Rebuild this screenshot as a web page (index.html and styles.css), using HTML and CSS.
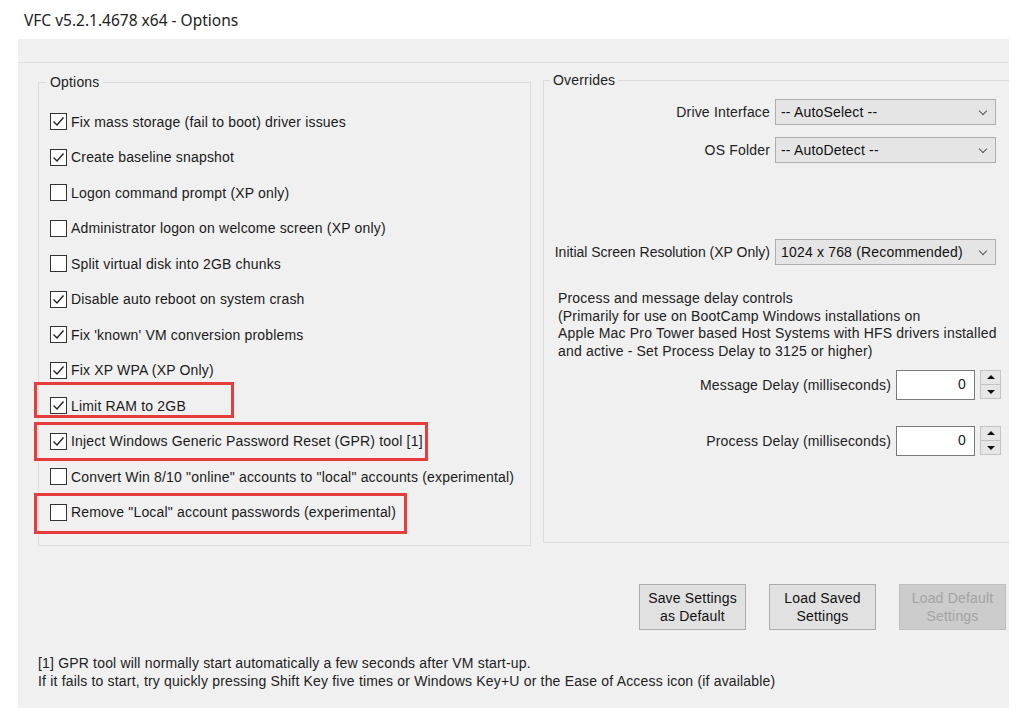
FILE: index.html
```html
<!DOCTYPE html>
<html lang="en">

<head>
    <meta charset="UTF-8">
    <meta name="viewport" content="width=device-width, initial-scale=1.0">
    <title>VFC v5.2.1.4678 x64 - Options</title>
    <link rel="stylesheet" href="styles.css">
</head>

<body>
    <div class="titlebar">VFC v5.2.1.4678 x64 - Options</div>

    <div class="window">
        <div class="top-strip"></div>

        <div class="main">
            <fieldset class="group options-group">
                <legend>Options</legend>
                <div class="option"><span class="box checked"></span>Fix mass storage (fail to boot) driver issues</div>
                <div class="option"><span class="box checked"></span>Create baseline snapshot</div>
                <div class="option"><span class="box"></span>Logon command prompt (XP only)</div>
                <div class="option"><span class="box"></span>Administrator logon on welcome screen (XP only)</div>
                <div class="option"><span class="box"></span>Split virtual disk into 2GB chunks</div>
                <div class="option"><span class="box checked"></span>Disable auto reboot on system crash</div>
                <div class="option"><span class="box checked"></span>Fix 'known' VM conversion problems</div>
                <div class="option"><span class="box checked"></span>Fix XP WPA (XP Only)</div>
                <div class="option"><span class="box checked"></span>Limit RAM to 2GB<span class="mark mark-ram"></span></div>
                <div class="option"><span class="box checked"></span>Inject Windows Generic Password Reset (GPR) tool [1]<span class="mark mark-gpr"></span></div>
                <div class="option"><span class="box"></span>Convert Win 8/10 "online" accounts to "local" accounts (experimental)</div>
                <div class="option"><span class="box"></span>Remove "Local" account passwords (experimental)<span class="mark mark-local"></span></div>
            </fieldset>

            <fieldset class="group overrides-group">
                <legend>Overrides</legend>
                <div class="select-grid">
                    <label>Drive Interface</label>
                    <div class="select">-- AutoSelect --<span class="chevron"></span></div>
                    <label>OS Folder</label>
                    <div class="select">-- AutoDetect --<span class="chevron"></span></div>
                </div>
                <div class="select-grid resolution">
                    <label>Initial Screen Resolution (XP Only)</label>
                    <div class="select">1024 x 768 (Recommended)<span class="chevron"></span></div>
                </div>

                <p class="delay-note">
                    Process and message delay controls<br>
                    (Primarily for use on BootCamp Windows installations on<br>
                    Apple Mac Pro Tower based Host Systems with HFS drivers installed<br>
                    and active - Set Process Delay to 3125 or higher)
                </p>

                <div class="delay-grid">
                    <label>Message Delay (milliseconds)</label>
                    <div class="num">0</div>
                    <div class="spin"><span class="up"></span><span class="down"></span></div>
                    <label>Process Delay (milliseconds)</label>
                    <div class="num">0</div>
                    <div class="spin"><span class="up"></span><span class="down"></span></div>
                </div>
            </fieldset>
        </div>

        <div class="buttons">
            <button class="btn">Save Settings<br>as Default</button>
            <button class="btn">Load Saved<br>Settings</button>
            <button class="btn disabled">Load Default<br>Settings</button>
        </div>

        <p class="footnote">
            [1] GPR tool will normally start automatically a few seconds after VM start-up.<br>
            If it fails to start, try quickly pressing Shift Key five times or Windows Key+U or the Ease of Access icon (if available)
        </p>
    </div>
</body>

</html>
```

FILE: styles.css
```css
* {
    box-sizing: border-box;
}

body {
    margin: 0;
    background: #ffffff;
    font-family: "Liberation Sans", Arial, sans-serif;
    font-size: 14px;
    letter-spacing: 0.18px;
    color: #1a1a1a;
}

.titlebar {
    height: 39px;
    line-height: 40px;
    padding-left: 24px;
    font-family: "Noto Sans", "Liberation Sans", sans-serif;
    font-size: 15.5px;
    letter-spacing: 0;
    color: #222;
}

.window {
    margin-left: 18px;
    width: 991px;
    height: 669px;
    background: #f0f0f0;
    overflow: hidden;
}

.top-strip {
    height: 24px;
    border-bottom: 1px solid #e2e2e2;
}

.main {
    display: flex;
    align-items: flex-start;
    gap: 12px;
    padding: 9px 0 0 20px;
}

.group {
    flex: none;
    margin: 0;
    padding: 0;
    border: 1px solid #dcdcdc;
    min-width: 0;
}

.group legend {
    padding: 0 3px;
    line-height: 16px;
    color: #222;
}

.options-group {
    margin-top: 2px;
    width: 493px;
    padding: 14px 0 15px 11px;
}

.options-group legend {
    margin-left: -3px;
}

.option {
    position: relative;
    height: 35.5px;
    display: flex;
    align-items: center;
    white-space: nowrap;
}

.box {
    width: 17px;
    height: 17px;
    margin-right: 4px;
    border: 1px solid #333;
    background: #fff;
    flex: none;
}

.box.checked {
    background: #fff url("data:image/svg+xml,%3Csvg xmlns='http://www.w3.org/2000/svg' width='15' height='15'%3E%3Cpolyline points='2.5,7.5 6,11 12.5,3.5' fill='none' stroke='%23222' stroke-width='1.4'/%3E%3C/svg%3E") no-repeat center;
}

.mark {
    position: absolute;
    left: -16px;
    border: 3px solid #e53c3c;
}

.mark-ram {
    top: -6px;
    width: 200px;
    height: 36px;
}

.mark-gpr {
    top: -2px;
    width: 394px;
    height: 39px;
}

.mark-local {
    top: -2px;
    width: 373px;
    height: 41px;
}

.overrides-group {
    width: 469px;
    height: 471px;
}

.overrides-group legend {
    margin-left: 6px;
}

.select-grid {
    display: grid;
    grid-template-columns: minmax(0, 1fr) 221px;
    column-gap: 5px;
    row-gap: 12px;
    align-items: center;
    margin-top: 11px;
    padding: 0 15px 0 9px;
}

.select-grid.resolution {
    margin-top: 76px;
    padding-left: 4px;
}

.select-grid.resolution label {
    letter-spacing: 0;
}

.select-grid label,
.delay-grid label {
    justify-self: end;
    white-space: nowrap;
    color: #222;
}

.select {
    position: relative;
    height: 26px;
    line-height: 24px;
    padding-left: 5px;
    background: #e5e5e5;
    border: 1px solid #adadad;
    color: #111;
    white-space: nowrap;
}

.chevron {
    position: absolute;
    right: 9px;
    top: 8px;
    width: 6px;
    height: 6px;
    border-right: 1px solid #555;
    border-bottom: 1px solid #555;
    transform: rotate(45deg);
}

.delay-note {
    margin: 25px 0 0 14px;
    line-height: 17.7px;
    color: #222;
    white-space: nowrap;
}

.delay-grid {
    display: grid;
    grid-template-columns: minmax(0, 1fr) 79px 21px;
    column-gap: 5px;
    row-gap: 26px;
    align-items: center;
    margin-top: 9px;
    padding: 0 10px 0 14px;
}

.num {
    height: 30px;
    line-height: 26px;
    padding-right: 8px;
    text-align: right;
    background: #fff;
    border: 1px solid #7a7a7a;
}

.spin {
    display: flex;
    flex-direction: column;
    height: 29px;
}

.spin span {
    position: relative;
    flex: 1;
    background: #e6e6e6;
    border: 1px solid #c4c4c4;
}

.spin .down {
    border-top: none;
}

.spin span::after {
    content: "";
    position: absolute;
    left: 6px;
    top: 4px;
    border-left: 4px solid transparent;
    border-right: 4px solid transparent;
}

.spin .up::after {
    border-bottom: 4px solid #111;
}

.spin .down::after {
    top: 5px;
    border-top: 4px solid #111;
}

.buttons {
    display: flex;
    justify-content: flex-end;
    gap: 23px;
    margin-top: 38px;
    padding-right: 3px;
}

.btn {
    width: 107px;
    height: 46px;
    padding: 0;
    font-family: inherit;
    font-size: 14px;
    letter-spacing: inherit;
    line-height: 18px;
    color: #111;
    background: #e1e1e1;
    border: 1px solid #adadad;
}

.btn.disabled {
    color: #a3a3a3;
    background: #cccccc;
    border-color: #bfbfbf;
}

.footnote {
    margin: 24px 0 0 20px;
    line-height: 18px;
    color: #222;
    white-space: nowrap;
}
```
